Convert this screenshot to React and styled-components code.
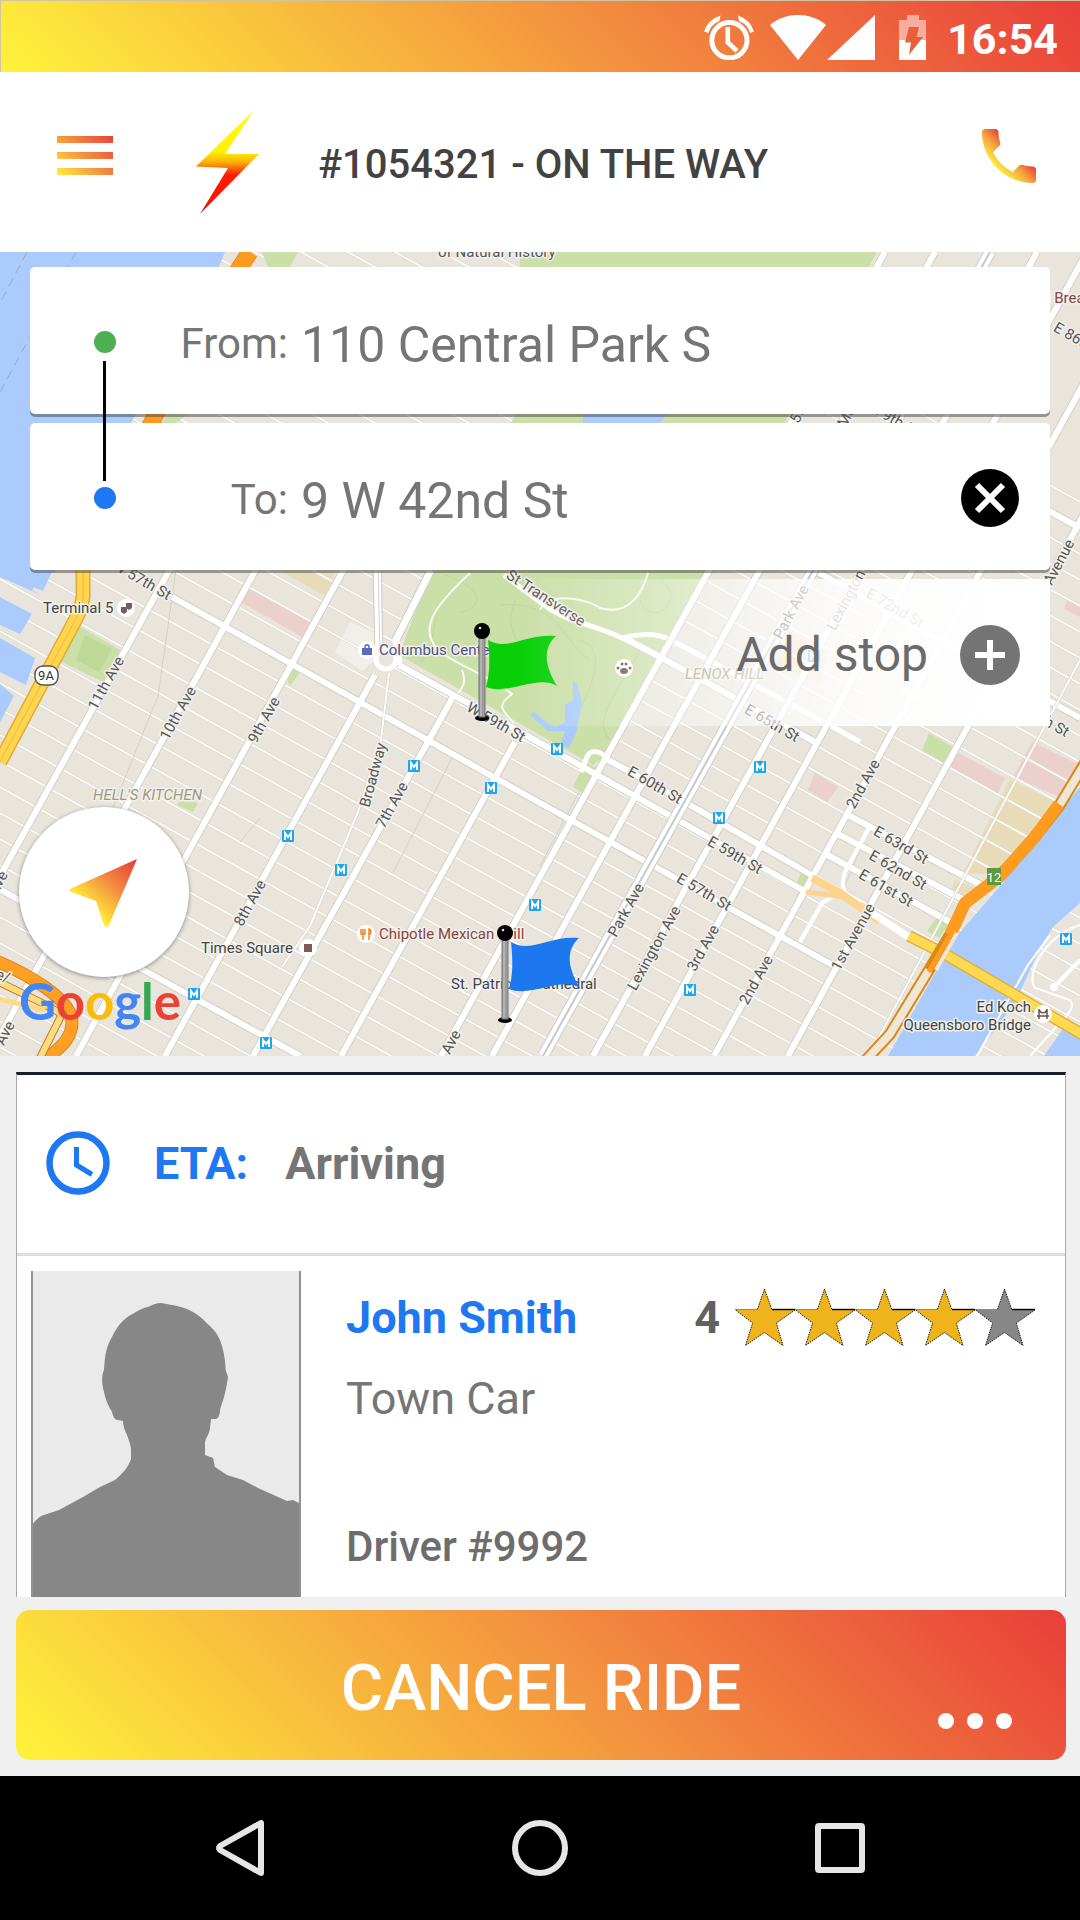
import React from 'react'
import styled, { createGlobalStyle } from 'styled-components';

const avenues = [
  'M186 540L-12 898',
  'M272 540L0 1036',
  'M360 540L76 1056',
  'M375 675L165 1056',
  'M454 695L253 1056',
  'M515 742L341 1056',
  'M885 252L441 1056',
  'M935 252L492 1056',
  'M1037 252L593 1056',
  'M1087 252L645 1056',
  'M1156 252L714 1056',
  'M1227 252L788 1056',
];

const crossStreets = [
  'M172 597L540 803L836 967',
  'M399 665L540 743L808 893',
  'M630 641L660 657L815 742',
  'M608 760L655 785L815 877',
  'M-20 878L138 967L300 1056',
  'M844 813L983 886',
  'M836 833L966 901',
  'M824 853L952 923',
  'M1040 506L1080 528',
  'M760 540L1080 718',
];

const stations = [
  [414, 766], [491, 788], [288, 836], [341, 870], [535, 905], [194, 994], [266, 1043],
  [557, 749], [760, 767], [719, 818], [690, 990], [1066, 939], [814, 656],
];

const streetLabels = [
  { text: '11th Ave', x: 106, y: 683, r: -61 },
  { text: '10th Ave', x: 178, y: 713, r: -61 },
  { text: '9th Ave', x: 264, y: 720, r: -61 },
  { text: '8th Ave', x: 250, y: 903, r: -61 },
  { text: '7th Ave', x: 392, y: 805, r: -61 },
  { text: 'Broadway', x: 373, y: 775, r: -75 },
  { text: 'W 57th St', x: 142, y: 580, r: 30 },
  { text: 'W 59th St', x: 496, y: 722, r: 30 },
  { text: 'St Transverse', x: 546, y: 598, r: 33 },
  { text: 'Ave', x: 451, y: 1042, r: -62 },
  { text: 'Ave', x: 5, y: 1033, r: -62 },
  { text: 'Ave', x: -2, y: 883, r: -62 },
  { text: 'e/', x: 3, y: 976, r: 20 },
  { text: 'Park Ave', x: 791, y: 612, r: -62 },
  { text: 'Lexington', x: 846, y: 600, r: -62 },
  { text: 'E 72nd St', x: 895, y: 608, r: 30 },
  { text: 'E 65th St', x: 772, y: 723, r: 30 },
  { text: 'E 60th St', x: 655, y: 785, r: 30 },
  { text: 'E 59th St', x: 735, y: 855, r: 30 },
  { text: 'E 57th St', x: 704, y: 892, r: 30 },
  { text: 'Park Ave', x: 626, y: 910, r: -61 },
  { text: 'Lexington Ave', x: 654, y: 948, r: -61 },
  { text: '3rd Ave', x: 703, y: 948, r: -61 },
  { text: '2nd Ave', x: 756, y: 980, r: -61 },
  { text: '2nd Ave', x: 863, y: 784, r: -61 },
  { text: '1st Avenue', x: 853, y: 937, r: -61 },
  { text: 'E 63rd St', x: 901, y: 845, r: 30 },
  { text: 'E 62nd St', x: 898, y: 870, r: 30 },
  { text: 'E 61st St', x: 886, y: 888, r: 30 },
  { text: 'E 70th St', x: 1042, y: 718, r: 30 },
  { text: '1st Avenue', x: 1053, y: 573, r: -62 },
  { text: 'E 86th St', x: 1081, y: 341, r: 30 },
  { text: '79th St', x: 897, y: 421, r: 30 },
  { text: '5th Ave', x: 806, y: 400, r: -61 },
  { text: 'Madison Ave', x: 862, y: 388, r: -61 },
];

const placeLabels = [
  { text: 'Terminal 5', x: 43, y: 613, color: '#444' },
  { text: 'Columbus Center', x: 379, y: 655, color: '#4b5180' },
  { text: 'Times Square', x: 201, y: 953, color: '#444' },
  { text: 'Chipotle Mexican Grill', x: 379, y: 939, color: '#86453d' },
  { text: "St. Patrick's Cathedral", x: 451, y: 989, color: '#444' },
  { text: 'Ed Koch', x: 1031, y: 1012, color: '#444', anchor: 'end' },
  { text: 'Queensboro Bridge', x: 1031, y: 1030, color: '#444', anchor: 'end' },
  { text: 'of Natural History', x: 438, y: 257, color: '#555' },
  { text: 'Lenox Hill Bread', x: 985, y: 303, color: '#86453d' },
  { text: "HELL'S KITCHEN", x: 93, y: 800, color: '#9d9980', italic: true },
  { text: 'LENOX HILL', x: 685, y: 679, color: '#9d9980', italic: true },
];

// numbered streets run parallel, 26 units apart
const minorStreets = Array.from({ length: 58 }, (_, i) => {
  const y = 1480 - i * 26;
  return `M0 ${y - 95}L1080 ${y + 504}`;
});

const Flag = ({ x, y, color }) => (
  <g transform={`translate(${x} ${y})`}>
    <ellipse cx='0' cy='87' rx='7' ry='3' fill='#000' />
    <rect x='-3' y='5' width='6' height='81' fill='#9b9b9b' stroke='#777' strokeWidth='1' />
    <path d='M-1 8V85' stroke='#c9c9c9' strokeWidth='1' />
    <path
      d='M6 9C25 21 44 2 74 5C62 16 61 32 75 55C56 43 26 65 4 56C8 42 8 28 6 9Z'
      fill={color}
    />
    <circle r='8' fill='#000' />
    <circle cx='-2' cy='-3' r='1.3' fill='#ddd' />
  </g>
);

const CityMap = () => (
  <MapDrawing viewBox='0 252 1080 804' preserveAspectRatio='xMidYMid slice' role='img' aria-label='Map'>
    <rect y='252' width='1080' height='804' fill='#e9e5dc' />
    <g fill='#ebd0ce'>
      <path d='M246 587L313 622L306 639L241 602Z' />
      <path d='M1032 742L1080 765V780L1060 797L1013 777Z' />
      <path d='M957 752L1005 778L998 793L950 768Z' />
      <path d='M815 773L838 787L827 802L808 790Z' />
      <path d='M1068 598L1080 604V617L1064 609Z' />
    </g>
    <g fill='#e8dcb8'>
      <path d='M1010 779L1057 803L1001 875L963 873Z' />
      <path d='M279 570H336L325 596L300 582Z' />
      <path d='M790 632L828 652L820 684L775 665Z' />
      <path d='M955 880L975 888L960 900L950 893Z' />
    </g>
    <path d='M350 622L375 633V660L362 671L335 652Z' fill='#fff' opacity='.4' />

    <g fill='none' stroke='#d9d4ca' strokeWidth='3'>
      {minorStreets.map((d) => <path key={d} d={d} />)}
    </g>
    <g fill='none' stroke='#fbfaf7' strokeWidth='2'>
      {minorStreets.map((d) => <path key={d} d={d} />)}
    </g>
    <path d='M176 570L158 696L110 815M455 752L393 873M860 850L843 890M260 818L240 842M580 790L540 866' stroke='#d6d1c7' strokeWidth='1' fill='none' />

    <g fill='#cbdfa9'>
      <path d='M262 252H298L290 267H268Z' />
      <path d='M79 626L120 650L103 682L58 660Z' />
      <path d='M293 668L300 672L291 685L287 682Z' />
      <path d='M181 800L198 803L193 812L177 805Z' />
      <path d='M929 733L953 747L944 763L922 750Z' />
      <path d='M802 871L812 877L805 893L795 887Z' />
      <path d='M936 918L948 925L939 938L927 931Z' />
      <path d='M168 414H188L176 423H162Z' />
      <path d='M877 252H520L516 414L430 573L399 655L540 735L593 765L604 757L704 573Z' />
      <path d='M585 762L603 771L585 794L573 787Z' />
    </g>
    <path d='M85 635L112 649L99 672L76 660Z' fill='#bdd897' />
    <g fill='none' stroke='#bfd69c' strokeWidth='1'>
      <path d='M450 590C425 620 440 650 420 662M515 600C500 640 530 640 520 670M580 640C610 650 590 690 575 720M660 580C690 600 650 630 640 600M500 605C560 600 560 640 590 660' />
      <path d='M610 740C590 720 620 690 640 650M445 575C490 590 480 610 460 612' />
    </g>
    <g fill='none' stroke='#f8faf3' strokeWidth='2'>
      <path d='M470 573C430 610 420 630 438 650C455 665 480 670 512 694C488 712 515 712 520 738' />
      <path d='M540 610C550 590 590 600 600 608C625 615 640 600 648 573M462 670C468 685 460 690 454 698' />
    </g>
    <path d='M573 681L577 683L582 703L576 733L569 748L560 745L565 731H548L530 715L534 712L545 721L555 727L565 722V705L573 700Z' fill='#abcbfd' />
    <path d='M583 414H667L660 423H583Z' fill='#abcbfd' />

    <path d='M504 575L540 602C570 625 590 622 622 638M622 638L660 656M622 638C640 634 655 632 671 640L826 723L860 742' stroke='#fff' strokeWidth='5' fill='none' />

    <g fill='none' stroke='#d5d0c6' strokeWidth='8'>
      {avenues.map((d) => <path key={d} d={d} />)}
      {crossStreets.map((d) => <path key={d} d={d} />)}
    </g>
    <g fill='none' stroke='#fff' strokeWidth='6'>
      {avenues.map((d) => <path key={d} d={d} />)}
      {crossStreets.map((d) => <path key={d} d={d} />)}
    </g>
    <path d='M990 252L543 1056' stroke='#cfcdca' strokeWidth='12' />
    <path d='M990 252L543 1056' stroke='#fff' strokeWidth='10' />
    <path d='M990 252L543 1056' stroke='#c5c7d1' strokeWidth='2' />
    <path d='M610 762C600 748 590 750 587 757L581 772' stroke='#fff' strokeWidth='5' fill='none' />
    <path d='M870 826L845 872C839 890 845 895 860 903M800 942L822 903L832 897' stroke='#fff' strokeWidth='4' fill='none' />

    <path d='M377 560L379 660M431 570L396 640' stroke='#cfcabf' strokeWidth='9' />
    <path d='M377 560L379 660M431 570L396 640L399 665' stroke='#fff' strokeWidth='7' fill='none' />
    <path d='M378 563L380 655' stroke='#d5d0c6' strokeWidth='1' />
    <circle cx='386' cy='659' r='10' fill='#e9e5dc' stroke='#fff' strokeWidth='5' />
    <path d='M389 673L381 740L358 812L310 926L282 967' stroke='#d5d0c6' strokeWidth='3' fill='none' />
    <path d='M389 673L381 740L358 812L310 926L282 967' stroke='#fff' strokeWidth='2' fill='none' />
    <path d='M1080 660L869 1056' stroke='#cfcabf' strokeWidth='3' />
    <path d='M1080 660L869 1056' stroke='#fff' strokeWidth='2' />

    <g fill='#abcbfd'>
      <path d='M0 252H225L205 300L136 414L131 423L55 572H52L43 591L0 572Z' />
      <path d='M0 577L41 595L32 590L50 565H0Z' />
      <path d='M0 597L32 614L20 634L0 625Z' />
      <path d='M0 638L35 658L26 685L0 672Z' />
      <path d='M0 684L14 696L0 722Z' />
      <path d='M1080 787L1036 840L1001 885L955 938L888 1056H975L1015 1003L1039 950L1053 927L1080 903Z' />
      <path d='M1080 1037L1062 1030L1044 1056H1080Z' />
    </g>
    <path d='M27 252L0 303M76 252L0 392' stroke='#98a9d2' strokeWidth='1' strokeDasharray='9 6' />
    <path d='M977 1056L1028 965L1050 935' stroke='#fff' strokeWidth='2' fill='none' />
    <path d='M1080 925C1045 935 1025 975 1035 988L1070 1000C1078 1010 1060 1020 1052 1032L1030 1056' stroke='#fff' strokeWidth='2' fill='none' />
    <path d='M1080 960L1054 987' stroke='#fff' strokeWidth='4' />
    <circle cx='1054' cy='987' r='4' fill='#fff' />

    <path d='M250 252L238 270L156 414L83 560' stroke='#e58a1d' strokeWidth='17' fill='none' />
    <path d='M250 252L238 270L156 414L83 560' stroke='#ff9b1f' strokeWidth='15' fill='none' />
    <path d='M83 568V597C81 612 76 618 70 630L0 762' stroke='#e3a93a' strokeWidth='15' fill='none' />
    <path d='M83 568V597C81 612 76 618 70 630L0 762' stroke='#ffd54f' strokeWidth='12' fill='none' />
    <path d='M83 568V597C81 612 76 618 70 630L0 762' stroke='#eeb838' strokeWidth='1' fill='none' />

    <path d='M-6 960C30 975 72 1000 72 1022C72 1042 55 1050 44 1062' stroke='#d9861c' strokeWidth='13' fill='none' />
    <path d='M-6 960C30 975 72 1000 72 1022C72 1042 55 1050 44 1062' stroke='#ff9f24' strokeWidth='11' fill='none' />
    <path d='M-5 980L40 1002L62 1014L38 1062' stroke='#c07a2a' strokeWidth='8' fill='none' />
    <path d='M-5 980L40 1002L62 1014L38 1062' stroke='#ffdb80' strokeWidth='6' fill='none' />
    <path d='M-5 998L45 1010' stroke='#ffdb80' strokeWidth='5' fill='none' />

    <path d='M812 878L840 893L880 921' stroke='#fdd58a' strokeWidth='8' fill='none' />
    <path d='M806 892L845 897L860 908' stroke='#fbd590' strokeWidth='5' fill='none' />
    <path d='M872 913L910 938' stroke='#fff' strokeWidth='7' />
    <path d='M909 936L945 954L1085 1036' stroke='#e0b13a' strokeWidth='12' fill='none' />
    <path d='M909 936L945 954L1085 1036' stroke='#ffd952' strokeWidth='9' fill='none' />
    <path d='M1088 758L1059 806L1034 838L1000 876L965 903L950 935L929 970L890 1034L866 1060' stroke='#d98916' strokeWidth='12' fill='none' />
    <path d='M1090 755L1059 806M929 970L890 1034L866 1060' stroke='#efe6d6' strokeWidth='8' fill='none' />
    <path d='M1059 804L1034 838L1000 876L965 903L950 935' stroke='#ff9b1f' strokeWidth='12' fill='none' />
    <path d='M950 935L929 972' stroke='#ff9b1f' strokeWidth='5' fill='none' />
    <path d='M957 933L936 970' stroke='#efe6d6' strokeWidth='4' fill='none' />

    <MapText>
      {streetLabels.map(({ text, x, y, r }) => (
        <text key={`${text}${x}`} transform={`translate(${x} ${y}) rotate(${r})`} y='5' textAnchor='middle' fill='#555'>
          {text}
        </text>
      ))}
      {placeLabels.map(({ text, x, y, color, anchor, italic }) => (
        <text key={text} x={x} y={y} fill={color} textAnchor={anchor} fontStyle={italic ? 'italic' : undefined}>
          {text}
        </text>
      ))}
    </MapText>

    {stations.map(([x, y]) => (
      <g key={`${x}${y}`} transform={`translate(${x} ${y})`}>
        <rect x='-6' y='-6' width='12' height='12' rx='1' fill='#1ba6ee' />
        <path d='M-3 4V-3L0 1L3 -3V4' stroke='#fff' strokeWidth='2' fill='none' />
      </g>
    ))}

    <g fill='#fff'>
      <circle cx='126' cy='608' r='9' />
      <circle cx='367' cy='650' r='9' />
      <circle cx='308' cy='948' r='9' />
      <circle cx='366' cy='934' r='9' />
      <circle cx='624' cy='668' r='9' />
      <circle cx='1043' cy='1014' r='9' />
    </g>
    <rect x='304' y='944' width='8' height='8' fill='#7b5b52' />
    <path d='M121 607H127V612L124 614L121 612ZM126 603H132V608L129 610L126 608Z' fill='#7b5b62' />
    <path d='M362 648H372V655H362Z' fill='#5c6bc0' />
    <path d='M365 649V647C365 644 369 644 369 647V649' stroke='#5c6bc0' strokeWidth='1.5' fill='none' />
    <path d='M363 929V940M361 929V934H365V929M369 940V929C372 930 371 934 369 935' stroke='#f58220' strokeWidth='1.5' fill='none' />
    <g fill='#6d5048'>
      <ellipse cx='624' cy='671' rx='4' ry='3' />
      <circle cx='618' cy='668' r='1.5' />
      <circle cx='622' cy='664' r='1.5' />
      <circle cx='626' cy='664' r='1.5' />
      <circle cx='630' cy='668' r='1.5' />
    </g>
    <path d='M1039 1009V1019M1047 1009V1019M1037 1016H1049M1039 1010Q1043 1016 1047 1010' stroke='#6d5048' strokeWidth='1.5' fill='none' />
    <rect x='35' y='666' width='23' height='19' rx='8' fill='#fff' stroke='#555' strokeWidth='1.5' />
    <text x='46' y='680' fontFamily='Roboto, sans-serif' fontSize='13' textAnchor='middle' fill='#333'>9A</text>
    <rect x='987' y='868' width='14' height='17' fill='#5b9a3f' />
    <text x='994' y='882' fontFamily='Roboto, sans-serif' fontSize='13' textAnchor='middle' fill='#fff'>12</text>

    <Flag x={482} y={631} color='#09cf09' />
    <Flag x={505} y={933} color='#1d78f0' />
  </MapDrawing>
);

const StatusBar = () => (
  <StatusRow>
    <svg width='50' height='45' viewBox='0 0 50 45' fill='#fff'>
      <circle cx='25.4' cy='25.2' r='17.6' fill='none' stroke='#fff' strokeWidth='5' />
      <path d='M23.8 12V27.5L33 36' fill='none' stroke='#fff' strokeWidth='4.6' />
      <path d='M0 16.5Q4 4.5 16.5 .5L15.5 6Q7 9 4.5 18Z' />
      <path d='M50 16.5Q46 4.5 34 .5L35 6Q43.5 9 46 18Z' />
    </svg>
    <svg width='56' height='45' viewBox='0 0 56 45' fill='#fff'>
      <path d='M28 45L0 10C8 3 18 0 28 0S48 3 56 10Z' />
    </svg>
    <svg width='48' height='45' viewBox='0 0 48 45' fill='#fff'>
      <path d='M0 45L48 0V45Z' />
    </svg>
    <Battery width='27' height='45' viewBox='0 0 27 45' fill='#fff'>
      <path d='M8 0H20V5H27V25H0V5H8Z' opacity='.5' />
      <path d='M0 25H27V45H0Z' />
      <path d='M10 12H20L17.5 22H24L10 40L12 27.5H6Z' fill='#ea5f3a' />
    </Battery>
    <Clock>16:54</Clock>
  </StatusRow>
);

const stars = [1, 2, 3, 4, 5];

const App = () => {
  return (
    <Screen>
      <GlobalStyle />
      <StatusBar />
      <Header>
        <MenuButton type='button' aria-label='Menu'>
          <svg width='56' height='40' viewBox='0 0 56 40'>
            <defs>
              <linearGradient id='menu' gradientUnits='userSpaceOnUse' x1='4' y1='45' x2='52' y2='-5'>
                <stop offset='0' stopColor='#fff33b' />
                <stop offset='.5' stopColor='#f3903f' />
                <stop offset='1' stopColor='#e93e3a' />
              </linearGradient>
            </defs>
            <path d='M0 0H56V7H0ZM0 16H56V23H0ZM0 32H56V39H0Z' fill='url(#menu)' />
          </svg>
        </MenuButton>
        <svg width='64' height='106' viewBox='0 0 64 106'>
          <defs>
            <linearGradient id='bolt' x1='0' y1='0' x2='0' y2='1'>
              <stop offset='0' stopColor='#ffff00' />
              <stop offset='.4' stopColor='#fff200' />
              <stop offset='.5' stopColor='#f9b208' />
              <stop offset='.62' stopColor='#ff1e00' />
              <stop offset='.88' stopColor='#f91400' />
              <stop offset='1' stopColor='#9c1a10' />
            </linearGradient>
          </defs>
          <path d='M58 1L29 45H63L4 105L32 59L0 57.5Z' fill='url(#bolt)' />
        </svg>
        <Title>#1054321 - ON THE WAY</Title>
        <CallButton type='button' aria-label='Call driver'>
          <svg width='72' height='72' viewBox='0 0 24 24'>
            <defs>
              <linearGradient id='call' gradientUnits='userSpaceOnUse' x1='7' y1='17' x2='14.5' y2='9.5'>
                <stop offset='.1' stopColor='#fff33b' />
                <stop offset='.6' stopColor='#f3a03f' />
                <stop offset='1' stopColor='#e93e3a' />
              </linearGradient>
            </defs>
            <path
              fill='url(#call)'
              d='M6.62 10.79c1.44 2.83 3.76 5.14 6.59 6.59l2.2-2.2c.27-.27.67-.36 1.02-.24 1.12.37 2.33.57 3.57.57.55 0 1 .45 1 1V20c0 .55-.45 1-1 1-9.39 0-17-7.61-17-17 0-.55.45-1 1-1h3.5c.55 0 1 .45 1 1 0 1.25.2 2.45.57 3.57.11.35.03.74-.25 1.02l-2.2 2.2z'
            />
          </svg>
        </CallButton>
      </Header>

      <MapArea>
        <CityMap />
        <Route>
          <Stop>
            <Dot $color='#4caf50' />
            <StopLabel htmlFor='from'>From:</StopLabel>
            <StopInput id='from' type='text' defaultValue='110 Central Park S' />
          </Stop>
          <Stop>
            <Dot $color='#1d78f2' />
            <StopLabel htmlFor='to'>To:</StopLabel>
            <StopInput id='to' type='text' defaultValue='9 W 42nd St' />
            <RoundButton type='button' aria-label='Remove stop'>
              <svg width='60' height='60' viewBox='0 0 60 60'>
                <circle cx='30' cy='30' r='29' fill='#000' />
                <path d='M17 17L43 43M43 17L17 43' stroke='#fff' strokeWidth='6' />
              </svg>
            </RoundButton>
          </Stop>
          <AddStop type='button'>
            Add stop
            <svg width='60' height='60' viewBox='0 0 60 60'>
              <circle cx='30' cy='30' r='30' fill='#747474' />
              <path d='M30 15V45M15 30H45' stroke='#fff' strokeWidth='6' />
            </svg>
          </AddStop>
          <RouteLine />
        </Route>
        <MapFooter>
          <LocateButton type='button' aria-label='My location'>
            <svg width='72' height='72' viewBox='0 0 72 72'>
              <defs>
                <linearGradient id='locate' gradientUnits='userSpaceOnUse' x1='20' y1='55' x2='66' y2='4'>
                  <stop offset='0' stopColor='#fff33b' />
                  <stop offset='.5' stopColor='#f3903f' />
                  <stop offset='1' stopColor='#e93e3a' />
                </linearGradient>
              </defs>
              <path
                d='M69 3L3 32.5C1 33.5 1 35 3 36L28 45L36 69C37 71.5 40 71.5 41 69Z'
                fill='url(#locate)'
              />
            </svg>
          </LocateButton>
          <GoogleMark>
            <Letter $color='#4285f4'>G</Letter>
            <Letter $color='#ea4335'>o</Letter>
            <Letter $color='#fbbc05'>o</Letter>
            <Letter $color='#4285f4'>g</Letter>
            <Letter $color='#34a853'>l</Letter>
            <Letter $color='#ea4335'>e</Letter>
          </GoogleMark>
        </MapFooter>
      </MapArea>

      <Panel>
        <RideCard>
          <EtaRow>
            <svg width='64' height='64' viewBox='0 0 64 64' fill='none' stroke='#1d78f2'>
              <circle cx='32' cy='32' r='28.5' strokeWidth='6.5' />
              <path d='M30.5 16V34L46 43.5' strokeWidth='5' />
            </svg>
            <Eta>ETA:</Eta>
            <EtaValue>Arriving</EtaValue>
          </EtaRow>
          <DriverRow>
            <Photo viewBox='0 0 270 326' role='img' aria-label='Driver photo'>
              <path d='M0 0H270V326H0Z' fill='#eaeaea' />
              <path
                fill='#878787'
                d='M130 32C125 32 121 34 117 36C110 37 104 42 98 45C89 51 85 58 81 66C75 76 74 84 73 99C70 106 71 114 73 121C75 130 78 136 81 141C82 146 84 149 87 149L92 150C92 155 94 160 96 164C98 170 100 174 100 179V188C97 197 91 203 84 209L69 216L52 226L28 239L10 245C6 248 3 251 1 254V326H270V233L262 229L256 230L227 217L212 209L196 204L184 196L182 187L174 184V171C176 165 179 161 179 157L180 148H185C188 147 189 143 189 139C190 134 192 130 193 126C195 119 196 112 197 106C196 102 194 99 194.5 96C194 86 192 77 189 69C185 60 181 57 175.6 52C171 47 167 44 162 41C155 37 148 35 141 34Z'
              />
              <path d='M1 0V326M269 0V326' stroke='#929292' strokeWidth='2' />
            </Photo>
            <DriverInfo>
              <NameRow>
                <DriverName>John Smith</DriverName>
                <Rating>
                  <Score>4</Score>
                  <Stars role='img' aria-label='4 out of 5'>
                    {stars.map((n) => (
                      <svg key={n} width='60' height='58' viewBox='0 0 60 58'>
                        <path
                          d='M29.5 1L37 22H60L41.3 35L48 57.5L29.5 44.5L10.5 57.5L17.6 35L0 21.5H22.4Z'
                          fill={n <= 4 ? '#efb31c' : '#878787'}
                        />
                        <path
                          d='M29.5 1L37 22M60 22L41.3 35L48 57.5L29.5 44.5L10.5 57.5L17.6 35L0 21.5M22.4 21.5L29.5 1'
                          fill='none'
                          stroke='#1c1a12'
                          strokeDasharray='1.5 1'
                        />
                        <path d='M37 21.5H60' stroke='#000' strokeWidth='1.4' />
                        <path d='M0 21.5H22.4' stroke='#8a8a8a' />
                      </svg>
                    ))}
                  </Stars>
                </Rating>
              </NameRow>
              <Car>Town Car</Car>
              <DriverNumber>Driver #9992</DriverNumber>
            </DriverInfo>
          </DriverRow>
        </RideCard>
        <CancelButton type='button'>
          CANCEL RIDE
          <MoreDots width='74' height='16' viewBox='0 0 74 16' fill='#fff'>
            <circle cx='8' cy='8' r='8' />
            <circle cx='37' cy='8' r='8' />
            <circle cx='66' cy='8' r='8' />
          </MoreDots>
        </CancelButton>
      </Panel>

      <NavBar>
        <NavButton type='button' aria-label='Back'>
          <svg width='56' height='56' viewBox='0 0 56 56'>
            <path d='M49 3V53L8 30Q6 28 8 26Z' />
          </svg>
        </NavButton>
        <NavButton type='button' aria-label='Home'>
          <svg width='56' height='56' viewBox='0 0 56 56'>
            <circle cx='28' cy='28' r='25' />
          </svg>
        </NavButton>
        <NavButton type='button' aria-label='Recent apps'>
          <svg width='56' height='56' viewBox='0 0 56 56'>
            <rect x='6' y='6' width='44' height='44' rx='1' />
          </svg>
        </NavButton>
      </NavBar>
    </Screen>
  )
}

const GlobalStyle = createGlobalStyle`
  *,
  *::before,
  *::after {
    box-sizing: border-box;
  }
  body {
    margin: 0;
    background: #f0f0f0;
    font-family: Roboto, sans-serif;
  }
  h1,
  h2,
  p {
    margin: 0;
  }
  button {
    padding: 0;
    border: none;
    background: none;
    font-family: inherit;
    cursor: pointer;
  }
  svg {
    display: block;
    flex-shrink: 0;
  }
`;

const Screen = styled.div`
  --sunset: linear-gradient(45deg, #fff33b, #f3903f 55%, #e93e3a);
  display: flex;
  flex-direction: column;
  min-height: 100vh;
`;

const StatusRow = styled.div`
  display: flex;
  justify-content: flex-end;
  align-items: center;
  height: 72px;
  padding: 3px 22px 0 0;
  background: var(--sunset);
  box-shadow: inset 1px 1px #cfc5a4;
  svg + svg {
    margin-left: 1px;
  }
  svg:first-child {
    margin-right: 15px;
  }
`;

const Battery = styled.svg`
  && {
    margin-left: 24px;
  }
`;

const Clock = styled.span`
  margin-left: 21px;
  padding-top: 3px;
  font-size: 43px;
  font-weight: 700;
  color: #fff;
`;

const Header = styled.header`
  display: flex;
  align-items: center;
  height: 180px;
  padding: 0 35px 0 57px;
  background: #fff;
`;

const MenuButton = styled.button`
  margin-right: 83px;
  padding-bottom: 12px;
`;

const Title = styled.h1`
  flex: 1;
  margin-left: 58px;
  padding-top: 4px;
  font-size: 40px;
  font-weight: 500;
  color: #424242;
`;

const CallButton = styled.button`
  padding-bottom: 12px;
`;

const MapArea = styled.main`
  position: relative;
  display: flex;
  flex-direction: column;
  flex: 1;
  padding: 15px 30px 23px;
`;

const MapDrawing = styled.svg`
  position: absolute;
  inset: 0;
  width: 100%;
  height: 100%;
`;

const MapText = styled.g`
  font-family: Roboto, sans-serif;
  font-size: 15px;
  paint-order: stroke;
  stroke: #f3f1ec;
  stroke-width: 3px;
  stroke-linejoin: round;
`;

const Route = styled.section`
  position: relative;
  display: grid;
  gap: 9px;
`;

const Stop = styled.div`
  display: flex;
  align-items: center;
  height: 147px;
  padding: 2px 30px 0 64px;
  border-radius: 5px;
  background: #fff;
  box-shadow: 0 3px rgba(70, 70, 70, 0.5);
`;

const Dot = styled.span`
  width: 22px;
  height: 22px;
  border-radius: 50%;
  background: ${({ $color }) => $color};
`;

const StopLabel = styled.label`
  width: 172px;
  padding-top: 4px;
  font-size: 42px;
  text-align: right;
  color: #757575;
`;

const StopInput = styled.input`
  flex: 1;
  min-width: 0;
  margin-left: 13px;
  padding: 6px 0 0;
  border: none;
  outline: none;
  background: transparent;
  font-family: inherit;
  font-size: 50px;
  color: #757575;
`;

const RoundButton = styled.button`
  border-radius: 50%;
`;

const AddStop = styled.button`
  display: flex;
  justify-content: flex-end;
  align-items: center;
  gap: 32px;
  height: 147px;
  padding: 4px 30px 0 0;
  background: linear-gradient(
    to right,
    transparent 48%,
    rgba(255, 255, 255, 0.4) 65%,
    rgba(255, 255, 255, 0.85) 80%,
    #fff 95%
  );
  font-size: 48px;
  color: #6b6b6b;
`;

const RouteLine = styled.span`
  position: absolute;
  top: 94px;
  left: 73px;
  width: 3px;
  height: 120px;
  background: #000;
`;

const MapFooter = styled.div`
  position: relative;
  margin: auto 0 0 -11px;
`;

const LocateButton = styled.button`
  display: grid;
  place-items: center;
  width: 170px;
  height: 170px;
  border-radius: 50%;
  background: #fff;
  box-shadow: 0 1px 4px rgba(0, 0, 0, 0.4);
`;

const GoogleMark = styled.div`
  padding-bottom: 8px;
  font-family: Lato, sans-serif;
  font-size: 51px;
  font-weight: 700;
  line-height: 48px;
`;

const Letter = styled.span`
  color: ${({ $color }) => $color};
`;

const Panel = styled.section`
  display: grid;
  gap: 13px;
  padding: 16px 14px 16px 16px;
`;

const RideCard = styled.article`
  border: 1px solid #a8a8a8;
  border-top: 3px solid #17212b;
  border-bottom: none;
  background: #fff;
`;

const EtaRow = styled.div`
  display: flex;
  align-items: center;
  height: 181px;
  padding: 0 0 2px 29px;
  border-bottom: 3px solid #ddd;
  font-size: 45px;
  font-weight: 700;
`;

const Eta = styled.span`
  margin-left: 44px;
  color: #1d78f2;
`;

const EtaValue = styled.span`
  margin-left: 37px;
  color: #757575;
`;

const DriverRow = styled.div`
  display: flex;
  padding: 15px 30px 0 14px;
`;

const Photo = styled.svg`
  width: 270px;
`;

const DriverInfo = styled.div`
  display: flex;
  flex-direction: column;
  flex: 1;
  padding: 17px 0 26px 45px;
`;

const NameRow = styled.div`
  display: flex;
  justify-content: space-between;
  align-items: center;
`;

const DriverName = styled.h2`
  font-size: 45px;
  font-weight: 700;
  color: #1d78f2;
`;

const Rating = styled.div`
  display: flex;
  align-items: center;
  gap: 15px;
`;

const Score = styled.span`
  font-size: 45px;
  font-weight: 700;
  color: #616161;
`;

const Stars = styled.div`
  display: flex;
`;

const Car = styled.p`
  margin-top: 26px;
  font-size: 45px;
  color: #757575;
`;

const DriverNumber = styled.p`
  margin-top: auto;
  font-size: 42px;
  font-weight: 500;
  color: #6d6d6d;
`;

const CancelButton = styled.button`
  position: relative;
  height: 150px;
  padding-top: 6px;
  border-radius: 14px;
  background: var(--sunset);
  font-size: 65px;
  font-weight: 500;
  color: #fff;
`;

const MoreDots = styled.svg`
  position: absolute;
  right: 54px;
  bottom: 31px;
`;

const NavBar = styled.nav`
  display: flex;
  height: 144px;
  padding: 0 90px;
  background: #000;
`;

const NavButton = styled.button`
  display: grid;
  place-items: center;
  flex: 1;
  svg {
    fill: none;
    stroke: #e6e6e6;
    stroke-width: 6;
    stroke-linejoin: round;
  }
`;

export default App
